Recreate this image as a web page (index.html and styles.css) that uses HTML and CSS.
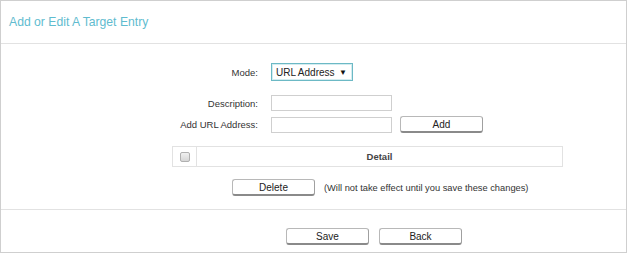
FILE: index.html
```html
<!DOCTYPE html>
<html lang="en">
<head>
  <meta charset="UTF-8">
  <title>Add or Edit A Target Entry</title>
  <link rel="stylesheet" href="styles.css">
</head>
<body>
  <div class="panel">
    <div class="panel-head">
      <h2>Add or Edit A Target Entry</h2>
    </div>

    <div class="panel-body">
      <div class="form-row row-mode">
        <label>Mode:</label>
        <div class="select-box">
          <span>URL Address</span>
          <span class="arrow">▼</span>
        </div>
      </div>

      <div class="form-row row-desc">
        <label>Description:</label>
        <input type="text" class="text-input">
      </div>

      <div class="form-row row-url">
        <label>Add URL Address:</label>
        <input type="text" class="text-input">
        <button class="btn btn-add">Add</button>
      </div>

      <table class="entry-table">
        <tr>
          <th class="col-check"><span class="checkbox"></span></th>
          <th>Detail</th>
        </tr>
      </table>

      <div class="delete-row">
        <button class="btn btn-delete">Delete</button>
        <span class="note">(Will not take effect until you save these changes)</span>
      </div>
    </div>

    <div class="panel-foot">
      <button class="btn btn-foot">Save</button>
      <button class="btn btn-foot">Back</button>
    </div>
  </div>
</body>
</html>
```

FILE: styles.css
```css
:root {
  --border: #cfcfcf;
  --line: #e2e2e2;
  --text: #333333;
  --teal: #5fbccf;
}

* {
  box-sizing: border-box;
}

body {
  margin: 0;
  font-family: "Liberation Sans", Arial, sans-serif;
  color: var(--text);
  background: #fff;
}

.panel {
  width: 627px;
  height: 253px;
  border: 1px solid var(--border);
  display: flex;
  flex-direction: column;
}

.panel-head {
  height: 43px;
  border-bottom: 1px solid var(--line);
  display: flex;
  align-items: center;
  padding-left: 8px;
}

.panel-head h2 {
  margin: 0 0 1px 0;
  font-size: 12.2px;
  font-weight: normal;
  color: var(--teal);
}

.panel-body {
  height: 165px;
  padding-top: 19px;
}

.form-row {
  display: flex;
  align-items: center;
  font-size: 9.5px;
}

.form-row label {
  width: 257px;
  text-align: right;
  margin-right: 13px;
}

.row-desc {
  margin-top: 14px;
}

.row-url {
  margin-top: 5px;
}

.select-box {
  width: 82px;
  height: 18px;
  border: 1px solid #6cb9c5;
  box-shadow: inset 0 0 0 1px #d3ecf0;
  display: flex;
  align-items: center;
  justify-content: space-between;
  padding: 0 5px 0 4px;
  font-size: 10px;
  color: #222;
}

.select-box .arrow {
  font-size: 8px;
  color: #111;
}

.text-input {
  width: 121px;
  height: 16px;
  border: 1px solid #cfcfcf;
  margin: 0;
  padding: 0 3px;
  font-size: 9.5px;
  font-family: inherit;
}

.btn {
  height: 17px;
  width: 83px;
  padding: 0;
  margin: 0;
  background: #fff;
  border: 1px solid #b8b8b8;
  border-bottom: 2px solid #8a8a8a;
  border-right-color: #a0a0a0;
  border-radius: 3px;
  font-family: inherit;
  font-size: 10px;
  color: #222;
}

.btn-add {
  margin-left: 8px;
}

.entry-table {
  margin: 13px 0 0 171px;
  width: 391px;
  border-collapse: collapse;
  border: 1px solid var(--line);
}

.entry-table th {
  height: 20px;
  padding: 0;
  font-size: 9.5px;
  font-weight: bold;
  color: #444;
}

.entry-table .col-check {
  width: 24px;
  border-right: 1px solid var(--line);
}

.checkbox {
  display: block;
  width: 10px;
  height: 10px;
  margin: 0 auto;
  border: 1px solid #b0b0b0;
  border-radius: 2px;
  background: linear-gradient(#f0f0f0, #d6d6d6);
}

.delete-row {
  margin: 12px 0 0 231px;
  display: flex;
  align-items: center;
  gap: 9px;
  font-size: 9.3px;
}

.panel-foot {
  flex: 1;
  border-top: 1px solid var(--line);
  padding: 18px 0 0 285px;
  display: flex;
  align-items: flex-start;
  gap: 10px;
}
```
